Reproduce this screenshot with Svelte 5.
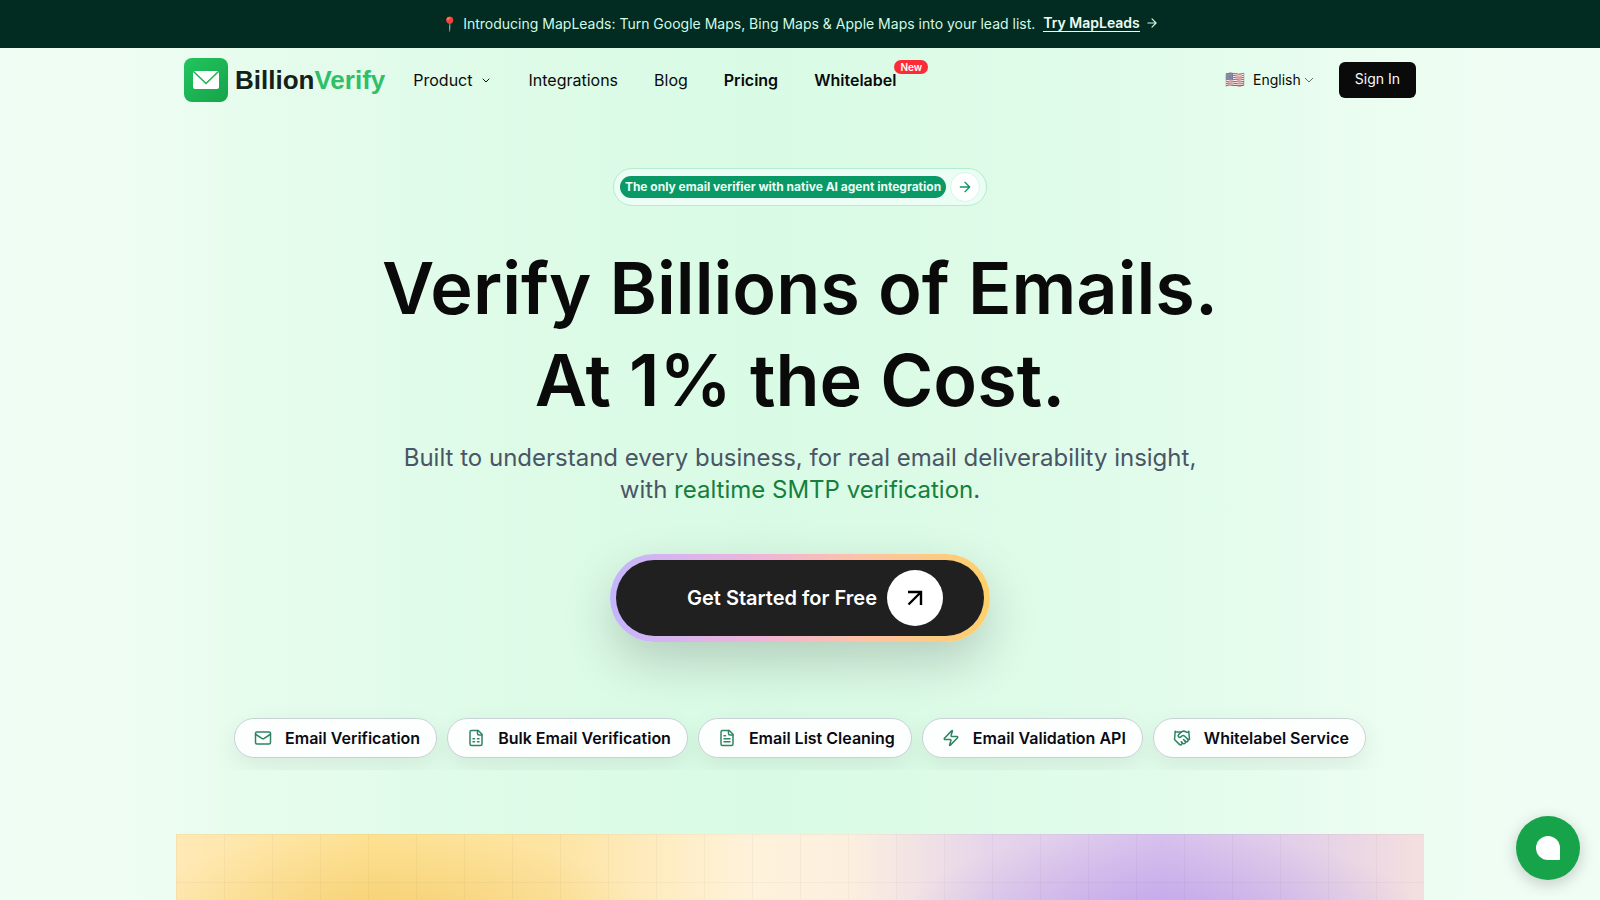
<script>
    const navLinks = [
        {label: 'Integrations'},
        {label: 'Blog'},
        {label: 'Pricing', strong: true},
        {label: 'Whitelabel', strong: true, badge: 'New'},
    ];

    const services = [
        {label: 'Email Verification', icon: 'mail'},
        {label: 'Bulk Email Verification', icon: 'sheet'},
        {label: 'Email List Cleaning', icon: 'text'},
        {label: 'Email Validation API', icon: 'zap'},
        {label: 'Whitelabel Service', icon: 'handshake'},
    ];

    // 24x24 stroke icons
    const icons = {
        mail: ['M4 4h16a2 2 0 0 1 2 2v12a2 2 0 0 1-2 2H4a2 2 0 0 1-2-2V6a2 2 0 0 1 2-2z', 'm22 7-8.97 5.7a1.94 1.94 0 0 1-2.06 0L2 7'],
        sheet: ['M15 2H6a2 2 0 0 0-2 2v16a2 2 0 0 0 2 2h12a2 2 0 0 0 2-2V7Z', 'M14 2v4a2 2 0 0 0 2 2h4', 'M8 13h2', 'M14 13h2', 'M8 17h2', 'M14 17h2'],
        text: ['M15 2H6a2 2 0 0 0-2 2v16a2 2 0 0 0 2 2h12a2 2 0 0 0 2-2V7Z', 'M14 2v4a2 2 0 0 0 2 2h4', 'M10 9H8', 'M16 13H8', 'M16 17H8'],
        zap: ['M4 14a1 1 0 0 1-.78-1.63l9.9-10.2a.5.5 0 0 1 .86.46l-1.92 6.02A1 1 0 0 0 13 10h7a1 1 0 0 1 .78 1.63l-9.9 10.2a.5.5 0 0 1-.86-.46l1.92-6.02A1 1 0 0 0 11 14z'],
        handshake: ['m11 17 2 2a1 1 0 1 0 3-3', 'm14 14 2.5 2.5a1 1 0 1 0 3-3l-3.88-3.88a3 3 0 0 0-4.24 0l-.88.88a1 1 0 1 1-3-3l2.81-2.81a5.79 5.79 0 0 1 7.06-.87l.47.28a2 2 0 0 0 1.42.25L21 4', 'm21 3 1 11h-2', 'M3 3 2 14l6.5 6.5a1 1 0 1 0 3-3', 'M3 4h8'],
    };
</script>

{#snippet arrow(size)}
    <svg width={size} height={size} viewBox="0 0 24 24" fill="none" stroke="currentColor" stroke-width="2" stroke-linecap="round" stroke-linejoin="round" aria-hidden="true">
        <path d="M5 12h14M12 5l7 7-7 7" />
    </svg>
{/snippet}

<div class="page">
    <div class="announcement">
        <span class="pin">📍</span>
        <span>Introducing MapLeads: Turn Google Maps, Bing Maps &amp; Apple Maps into your lead list.</span>
        <a href="#mapleads">Try MapLeads</a>
        {@render arrow(14)}
    </div>

    <header>
        <a class="brand" href="#home">
            <svg width="44" height="44" viewBox="0 0 44 44" aria-hidden="true">
                <defs>
                    <linearGradient id="brand-fill" x1="0" y1="0" x2="1" y2="1">
                        <stop offset="0" stop-color="#22c55e" />
                        <stop offset="1" stop-color="#16a34a" />
                    </linearGradient>
                </defs>
                <rect width="44" height="44" rx="8" fill="url(#brand-fill)" />
                <rect x="9" y="13" width="26" height="18" rx="2" fill="#fff" />
                <path d="m9.500 13.500 12.500 12 12.500-12" fill="none" stroke="#1eb355" stroke-width="1.600" />
            </svg>
            <span class="brand-name">Billion<span>Verify</span></span>
        </a>

        <nav>
            <button class="product">
                Product
                <svg width="12" height="12" viewBox="0 0 12 12" fill="none" stroke="currentColor" stroke-linecap="round" stroke-linejoin="round" aria-hidden="true">
                    <path d="m3 5 3 3 3-3" />
                </svg>
            </button>
            {#each navLinks as link}
                <a href="#{link.label.toLowerCase()}" class:strong={link.strong}>
                    {link.label}
                    {#if link.badge}
                        <span class="new">{link.badge}</span>
                    {/if}
                </a>
            {/each}
        </nav>

        <div class="account">
            <button class="language">
                <span class="flag">🇺🇸</span>
                <span>English</span>
                <svg width="12" height="12" viewBox="0 0 12 12" fill="none" stroke="#667069" aria-hidden="true">
                    <path d="m2 5 4 4 4-4" />
                </svg>
            </button>
            <a class="sign-in" href="#signin">Sign In</a>
        </div>
    </header>

    <main>
        <a class="notice" href="#agents">
            <span class="notice-text">The only email verifier with native AI agent integration</span>
            <span class="notice-arrow">{@render arrow(16)}</span>
        </a>

        <h1>Verify Billions of Emails.<br />At 1% the Cost.</h1>

        <p class="lead">
            Built to understand every business, for real email deliverability insight, with <span>realtime SMTP verification</span>.
        </p>

        <a class="cta" href="#start">
            <span class="cta-inner">
                Get Started for Free
                <span class="cta-arrow">
                    <svg width="24" height="24" viewBox="0 0 24 24" fill="none" stroke="currentColor" stroke-width="2.400" aria-hidden="true">
                        <path d="M5 6h13v13M18 6 5.500 18.500" />
                    </svg>
                </span>
            </span>
        </a>

        <div class="services">
            {#each services as service}
                <a class="service" href="#{service.icon}">
                    <svg width="18" height="18" viewBox="0 0 24 24" fill="none" stroke="currentColor" stroke-width="2" stroke-linecap="round" stroke-linejoin="round" aria-hidden="true">
                        {#each icons[service.icon] as d}
                            <path {d} />
                        {/each}
                    </svg>
                    {service.label}
                </a>
            {/each}
        </div>

        <section class="showcase" aria-label="Preview"></section>
    </main>

    <button class="chat" aria-label="Open chat"><span></span></button>
</div>

<style>
    :global(body) {
        margin: 0;
    }

    .page {
        min-height: 100vh;
        display: flex;
        flex-direction: column;
        font-family: Inter, "Liberation Sans", sans-serif;
        color: #0a0a0a;
        background: linear-gradient(90deg, #f0fdf4 0%, #effdf3 8%, #e6fced 16%, #defbe8 32%, #d9fbe5 48%, #defbe8 62%, #e3fcec 76%, #ebfdf1 86%, #f0fdf4 94%);
    }

    .page :global(svg) {
        flex-shrink: 0;
    }

    a {
        color: inherit;
        text-decoration: none;
    }

    button {
        padding: 0;
        border: 0;
        background: none;
        font: inherit;
        color: inherit;
        cursor: pointer;
    }

    .announcement {
        box-sizing: border-box;
        height: 48px;
        padding-bottom: 2px;
        display: flex;
        align-items: center;
        justify-content: center;
        background: #022c22;
        color: #d0fae5;
        font-size: 14px;
    }

    .announcement a {
        margin: 0 5px 0 8px;
        border-bottom: 1px solid currentColor;
        color: #ecfdf5;
        font-weight: 600;
    }

    .pin {
        margin-right: 5px;
    }

    header {
        box-sizing: border-box;
        width: 100%;
        max-width: 1264px;
        height: 64px;
        margin: 0 auto;
        padding: 0 16px;
        display: flex;
        align-items: center;
    }

    .brand {
        display: flex;
        align-items: center;
        gap: 7px;
        margin-right: 28px;
    }

    .brand-name {
        font-family: "Liberation Sans", Arial, sans-serif;
        font-size: 26px;
        font-weight: 700;
        color: #14211b;
    }

    .brand-name span {
        color: #2fbf68;
    }

    nav {
        display: flex;
        align-items: center;
        gap: 36px;
        font-size: 16px;
    }

    nav a {
        position: relative;
    }

    .product {
        display: flex;
        align-items: center;
        gap: 8px;
    }

    .strong {
        font-weight: 600;
    }

    .new {
        position: absolute;
        left: 100%;
        top: -10px;
        margin-left: -2px;
        padding: 0 6px;
        border-radius: 7px;
        background: #fb2c36;
        color: #fff;
        font-size: 10px;
        line-height: 14px;
    }

    .account {
        margin-left: auto;
        display: flex;
        align-items: center;
        gap: 24px;
        font-size: 14px;
    }

    .language {
        display: flex;
        align-items: center;
        gap: 2px;
        padding-bottom: 2px;
    }

    .flag {
        margin-right: 6px;
        font-size: 16px;
        opacity: 0.8;
    }

    .sign-in {
        padding: 0 16px 2px;
        border-radius: 6px;
        background: #0a0a0a;
        color: #fafafa;
        line-height: 34px;
    }

    main {
        flex: 1;
        display: flex;
        flex-direction: column;
        align-items: center;
        padding: 56px 16px 0;
    }

    .notice {
        display: flex;
        align-items: center;
        gap: 4px;
        padding: 3px 6px;
        border: 1px solid #b3ecd0;
        border-radius: 19px;
        background: #ecfdf5;
    }

    .notice-text {
        padding: 0 5px;
        border-radius: 11px;
        background: #099966;
        color: #ecfdf5;
        font-size: 12px;
        font-weight: 700;
        line-height: 22px;
    }

    .notice-arrow {
        box-sizing: border-box;
        width: 30px;
        height: 30px;
        display: flex;
        align-items: center;
        justify-content: center;
        border: 1px solid #d0fae5;
        border-radius: 50%;
        background: #fff;
        color: #099966;
    }

    h1 {
        margin: 36px 0 0;
        font-size: 72px;
        font-weight: 600;
        line-height: 92px;
        text-align: center;
    }

    .lead {
        max-width: 820px;
        margin: 16px 0 0;
        color: #4a5565;
        font-size: 24px;
        line-height: 32px;
        text-align: center;
    }

    .lead span {
        color: #15803d;
    }

    .cta {
        margin-top: 48px;
        padding: 6px;
        border-radius: 44px;
        background: linear-gradient(90deg, #c4b5fd, #f0b4d8 40%, #fdc2a8 65%, #fdd06a);
        box-shadow: 0 20px 50px rgba(0, 0, 0, 0.18);
    }

    .cta-inner {
        display: flex;
        align-items: center;
        gap: 10px;
        padding: 10px 41px 10px 71px;
        border-radius: 38px;
        background: #202020;
        color: #fff;
        font-size: 20px;
        font-weight: 600;
    }

    .cta-arrow {
        width: 56px;
        height: 56px;
        display: flex;
        align-items: center;
        justify-content: center;
        border-radius: 50%;
        background: #fff;
        color: #000;
    }

    .services {
        display: flex;
        flex-wrap: wrap;
        justify-content: center;
        gap: 10px;
        margin-top: 64px;
        padding: 12px 16px;
        overflow: hidden;
    }

    .service {
        box-sizing: border-box;
        height: 40px;
        display: flex;
        align-items: center;
        gap: 13px;
        padding: 0 16px 0 19px;
        border: 1px solid #c9d3d6;
        border-radius: 20px;
        background: #fcfffd;
        box-shadow: 0 8px 24px rgba(0, 0, 0, 0.07);
        color: #0a0a14;
        font-size: 16px;
        font-weight: 600;
    }

    .service svg {
        color: #2f8463;
    }

    .showcase {
        flex: 1;
        box-sizing: border-box;
        width: 100%;
        max-width: 1248px;
        min-height: 66px;
        margin-top: 64px;
        background:
            repeating-linear-gradient(90deg, rgba(0, 0, 0, 0.03) 0 1px, transparent 1px 48px),
            repeating-linear-gradient(180deg, rgba(0, 0, 0, 0.03) 0 1px, transparent 1px 48px),
            radial-gradient(ellipse 260px 90px at 17% 130%, rgba(240, 196, 90, 0.6), transparent),
            radial-gradient(ellipse 260px 90px at 79% 130%, rgba(180, 150, 232, 0.65), transparent),
            linear-gradient(90deg, #ffe9b5, #fee294 16%, #fde4a2 30%, #fff2da 46%, #fcefdf 54%, #e6d5ea 65%, #d8c2ee 79%, #e3d0e8 90%, #f4dfdf);
    }

    .chat {
        position: fixed;
        right: 20px;
        bottom: 20px;
        width: 64px;
        height: 64px;
        display: flex;
        align-items: center;
        justify-content: center;
        border-radius: 50%;
        background: #16a34a;
        box-shadow: 0 4px 16px rgba(0, 0, 0, 0.2);
    }

    .chat span {
        width: 24px;
        height: 24px;
        border-radius: 50% 50% 1px 50%;
        background: #fff;
    }
</style>
